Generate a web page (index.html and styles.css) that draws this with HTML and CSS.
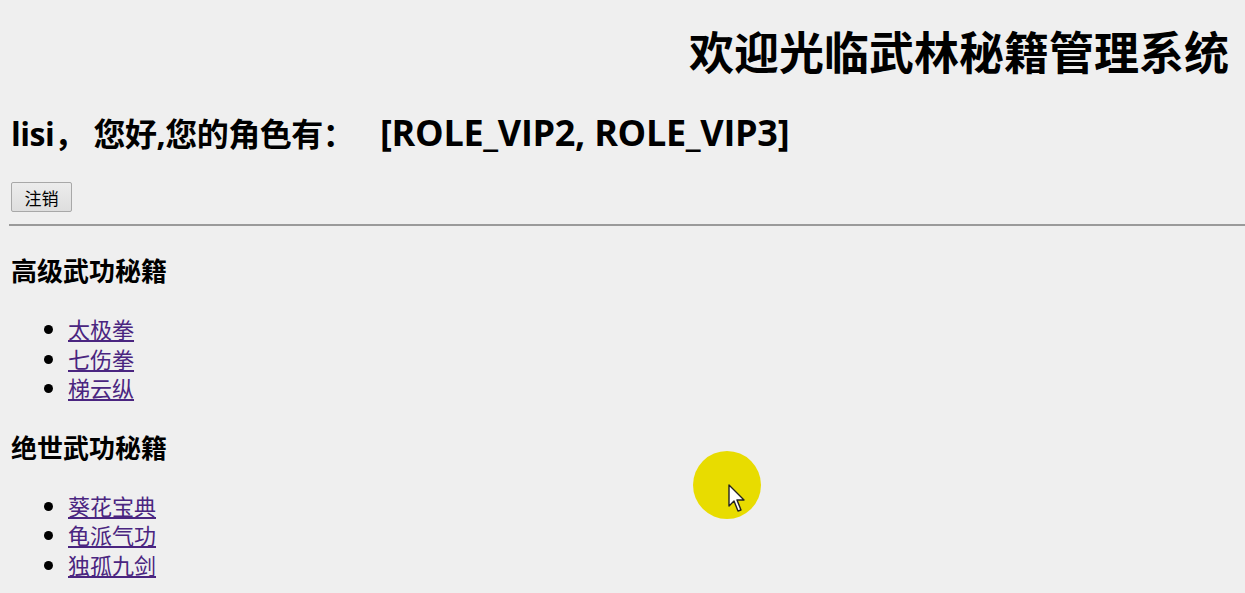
FILE: index.html
```html
<!DOCTYPE html>
<html lang="zh-CN">
<head>
<meta charset="utf-8">
<title>武林秘籍管理系统</title>
<link rel="stylesheet" href="styles.css">
</head>
<body>
<h1 class="title">欢迎光临武林秘籍管理系统</h1>
<h2 class="greeting">lisi， 您好,您的角色有： <span class="roles">[ROLE_VIP2, ROLE_VIP3]</span></h2>
<form class="logout">
  <button type="button" class="btn">注销</button>
</form>
<hr class="divider">
<h3 class="section-title first">高级武功秘籍</h3>
<ul class="book-list first-list">
  <li><a href="#">太极拳</a></li>
  <li><a href="#">七伤拳</a></li>
  <li><a href="#">梯云纵</a></li>
</ul>
<h3 class="section-title second">绝世武功秘籍</h3>
<ul class="book-list second-list">
  <li><a href="#">葵花宝典</a></li>
  <li><a href="#">龟派气功</a></li>
  <li><a href="#">独孤九剑</a></li>
</ul>
<div class="cursor-highlight">
  <svg class="cursor" width="20" height="30" viewBox="0 0 20 30">
    <path d="M1 1 L1 22 L6 17 L10 27 L13 26 L9 16 L16 16 Z" fill="#ffffff" stroke="#222" stroke-width="1.4" stroke-linejoin="round"/>
  </svg>
</div>
</body>
</html>
```
FILE: styles.css
```css
html, body {
  margin: 0;
  padding: 0;
}
body {
  background: #efefef;
  color: #000;
  font-family: "Noto Sans CJK SC", "Noto Sans", sans-serif;
  padding: 0 11px;
  position: relative;
  min-height: 593px;
  box-sizing: border-box;
  overflow: hidden;
}
.title {
  font-size: 45px;
  line-height: 54px;
  font-weight: 700;
  text-align: right;
  margin: 24px 5px 0 0;
}
.greeting {
  font-family: "Open Sans", "Noto Sans CJK SC", sans-serif;
  font-size: 32px;
  line-height: 36px;
  height: 36px;
  font-weight: 700;
  margin: 37px 0 0;
  letter-spacing: -0.5px;
}
.roles {
  font-size: 36px;
  line-height: 36px;
  margin-left: 18px;
  letter-spacing: -0.3px;
}
.logout {
  margin: 31px 0 0;
  display: flex;
}
.btn {
  width: 61px;
  height: 30px;
  font-family: "Noto Sans CJK SC", sans-serif;
  font-size: 17px;
  line-height: 1;
  padding: 0;
  background: linear-gradient(#ececec, #dedede);
  border: 1px solid #a8a8a8;
  border-radius: 2px;
  color: #000;
}
.divider {
  margin: 12px -11px 0 -2px;
  border: 0;
  border-top: 2px solid #9a9a9a;
  height: 0;
}
.section-title {
  font-size: 26px;
  line-height: 32px;
  font-weight: 700;
  margin: 0;
}
.section-title.first { margin-top: 28px; }
.section-title.second { margin-top: 28px; }
.book-list {
  margin: 0;
  padding-left: 57px;
  font-size: 22px;
  line-height: 29.5px;
}
.first-list { margin-top: 28px; }
.second-list { margin-top: 28px; }
.book-list a {
  color: #4a2580;
  text-decoration: underline;
}
.cursor-highlight {
  position: absolute;
  left: 693px;
  top: 451px;
  width: 68px;
  height: 68px;
  border-radius: 50%;
  background: #e8dc00;
}
.cursor {
  position: absolute;
  left: 35px;
  top: 33px;
}
```
